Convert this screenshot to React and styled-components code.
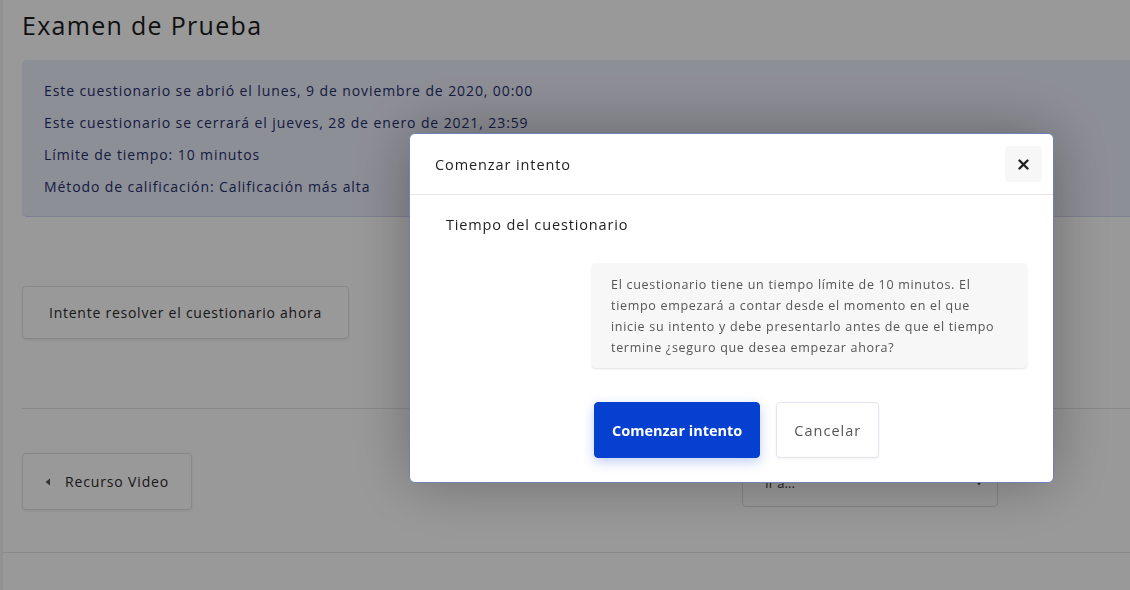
import React from "react";
import styled, { createGlobalStyle } from "styled-components";

const GlobalStyle = createGlobalStyle`
  html, body {
    margin: 0;
    padding: 0;
    background: #ffffff;
    font-family: "Open Sans", "Liberation Sans", sans-serif;
    color: #222;
  }
  * { box-sizing: border-box; }
`;

const Page = styled.div`
  width: 1130px;
  height: 590px;
  overflow: hidden;
  border-left: 3px solid #f2f2f2;
`;

const Content = styled.div`
  padding: 8px 0 0 19px;
`;

const Title = styled.h1`
  margin: 0;
  font-size: 25px;
  font-weight: 400;
  line-height: 34px;
  color: #1b1b1b;
  letter-spacing: 1.3px;
`;

const InfoBox = styled.div`
  margin-top: 18px;
  width: 1140px;
  height: 157px;
  padding: 20px 22px;
  background: #eceefa;
  border-bottom: 1px solid #d3d8ee;
  border-radius: 5px 0 0 5px;
  display: flex;
  flex-direction: column;
  gap: 11px;
`;

const InfoLine = styled.p`
  margin: 0;
  font-size: 14px;
  line-height: 21px;
  letter-spacing: 0.9px;
  color: #1f2e6e;
`;

const ActionRow = styled.div`
  padding: 69px 0 69px;
  border-bottom: 1px solid #e4e4e4;
`;

const GhostButton = styled.button`
  display: inline-flex;
  align-items: center;
  gap: 14px;
  height: ${(p) => p.$h}px;
  padding: 0 ${(p) => p.$px}px;
  background: #fff;
  border: 1px solid #e3e3e8;
  border-radius: 4px;
  box-shadow: 0 1px 3px rgba(0, 0, 0, 0.08);
  font-family: inherit;
  font-size: 14px;
  font-weight: 500;
  letter-spacing: ${(p) => p.$ls}px;
  color: #2a2a2a;
`;

const NavRow = styled.div`
  display: flex;
  align-items: flex-start;
  padding: 44px 0 42px 19px;
  border-bottom: 1px solid #e4e4e4;
`;

const SelectBox = styled.div`
  margin-left: 550px;
  margin-top: 6px;
  width: 256px;
  height: 48px;
  display: flex;
  align-items: center;
  justify-content: space-between;
  padding: 0 14px 0 22px;
  border: 1px solid #dcdcdc;
  border-radius: 4px;
  background: #fff;
  font-size: 13px;
  color: #333;
`;

const Overlay = styled.div`
  position: fixed;
  inset: 0;
  background: rgba(0, 0, 0, 0.4);
  padding: 133px 0 0 409px;
`;

const Modal = styled.div`
  width: 645px;
  height: 350px;
  background: #fff;
  border: 1px solid #7080b8;
  border-radius: 6px;
  box-shadow: 0 0 60px rgba(0, 0, 0, 0.3);
  display: flex;
  flex-direction: column;
`;

const ModalHeader = styled.div`
  height: 61px;
  flex: none;
  display: flex;
  align-items: center;
  justify-content: space-between;
  padding: 0 11px 0 25px;
  border-bottom: 1px solid #e6e6e6;
`;

const ModalTitle = styled.h5`
  margin: 0;
  font-size: 14.5px;
  font-weight: 400;
  letter-spacing: 0.9px;
  color: #222;
`;

const CloseButton = styled.button`
  width: 37px;
  height: 36px;
  border: none;
  border-radius: 4px;
  background: #f7f7f7;
  display: flex;
  align-items: center;
  justify-content: center;
  padding: 0;
`;

const ModalBody = styled.div`
  padding: 20px 26px 26px 36px;
  display: flex;
  flex-direction: column;
`;

const Label = styled.div`
  font-size: 14.5px;
  line-height: 20px;
  letter-spacing: 0.85px;
  color: #222;
`;

const Notice = styled.div`
  margin: 28px 0 0 146px;
  width: 435px;
  padding: 11px 26px 10px 19px;
  background: #f7f7f7;
  border-radius: 4px;
  box-shadow: 0 1px 2px rgba(0, 0, 0, 0.12);
  font-size: 12.5px;
  line-height: 21px;
  letter-spacing: 0.7px;
  color: #555;
`;

const Actions = styled.div`
  margin: 34px 0 0 148px;
  display: flex;
  gap: 16px;
`;

const ActionButton = styled.button`
  height: 56px;
  padding: 0 17px;
  border-radius: 4px;
  font-family: inherit;
  font-size: 14.5px;
  font-weight: ${(p) => (p.$primary ? 700 : 400)};
  letter-spacing: ${(p) => (p.$primary ? 0 : 1)}px;
  color: ${(p) => (p.$primary ? "#fff" : "#555")};
  background: ${(p) => (p.$primary ? "#0540d0" : "#fff")};
  border: 1px solid ${(p) => (p.$primary ? "#0540d0" : "#e3e5f0")};
  box-shadow: ${(p) =>
    p.$primary ? "0 4px 12px rgba(5, 64, 208, 0.25)" : "0 1px 3px rgba(0,0,0,0.06)"};
`;

const LeftCaret = () => (
  <svg width="6" height="8" viewBox="0 0 6 8">
    <path d="M5 0.5 L0.5 4 L5 7.5 Z" fill="#555" />
  </svg>
);

export default function App() {
  return (
    <>
      <GlobalStyle />
      <Page>
        <Content>
          <Title>Examen de Prueba</Title>
          <InfoBox>
            <InfoLine>Este cuestionario se abrió el lunes, 9 de noviembre de 2020, 00:00</InfoLine>
            <InfoLine>Este cuestionario se cerrará el jueves, 28 de enero de 2021, 23:59</InfoLine>
            <InfoLine>Límite de tiempo: 10 minutos</InfoLine>
            <InfoLine>Método de calificación: Calificación más alta</InfoLine>
          </InfoBox>
          <ActionRow>
            <GhostButton $h={53} $px={26} $ls={0.75}>
              Intente resolver el cuestionario ahora
            </GhostButton>
          </ActionRow>
        </Content>
        <NavRow>
          <GhostButton $h={57} $px={22} $ls={0.85}>
            <LeftCaret />
            Recurso Video
          </GhostButton>
          <SelectBox>
            <span>Ir a...</span>
            <svg width="8" height="6" viewBox="0 0 8 6">
              <path d="M0.5 0.5 L7.5 0.5 L4 5.5 Z" fill="#444" />
            </svg>
          </SelectBox>
        </NavRow>
      </Page>
      <Overlay>
        <Modal role="dialog">
          <ModalHeader>
            <ModalTitle>Comenzar intento</ModalTitle>
            <CloseButton aria-label="Cerrar">
              <svg width="11" height="11" viewBox="0 0 11 11">
                <path d="M1.5 1.5 L9.5 9.5 M9.5 1.5 L1.5 9.5" stroke="#222" strokeWidth="2.4" strokeLinecap="round" />
              </svg>
            </CloseButton>
          </ModalHeader>
          <ModalBody>
            <Label>Tiempo del cuestionario</Label>
            <Notice>
              El cuestionario tiene un tiempo límite de 10 minutos. El tiempo empezará a contar desde el momento en el que inicie su intento y debe presentarlo antes de que el tiempo termine ¿seguro que desea empezar ahora?
            </Notice>
            <Actions>
              <ActionButton $primary>Comenzar intento</ActionButton>
              <ActionButton>Cancelar</ActionButton>
            </Actions>
          </ModalBody>
        </Modal>
      </Overlay>
    </>
  );
}
